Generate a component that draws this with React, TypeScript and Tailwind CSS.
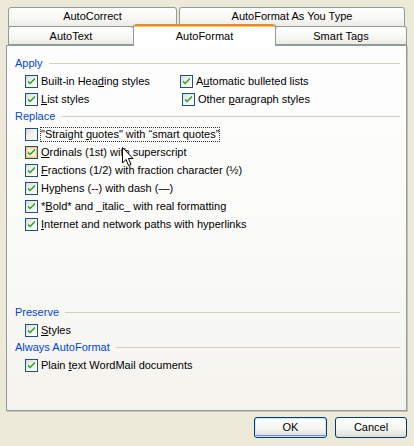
import React from "react";

const FONT = "font-['Tahoma','Liberation_Sans',sans-serif] text-[11px] leading-[13px]";

function Check({ checked, hot }: { checked: boolean; hot?: boolean }) {
  return (
    <span
      className={`relative flex h-[13px] w-[13px] shrink-0 items-center justify-center border border-[#1c5180] ${
        hot
          ? "bg-[linear-gradient(135deg,#f1efe2_0%,#fbfaf6_100%)] shadow-[inset_0_0_0_1px_#fbc76a,inset_0_0_0_2px_#fde3a3]"
          : "bg-[linear-gradient(135deg,#dcdcd7_0%,#f4f4f1_55%,#ffffff_100%)]"
      }`}
    >
      {checked ? (
        <svg viewBox="0 0 7 7" className="relative h-[7px] w-[7px]">
          <path d="M0 2.5 L0 4.5 L2 6.5 L7 1.5 L7 -0.5 L2 4.5 Z" fill="#21a121" />
        </svg>
      ) : null}
    </span>
  );
}

function Key({ children }: { children: React.ReactNode }) {
  return <span className="underline underline-offset-[1px]">{children}</span>;
}

function Item({
  checked = true,
  hot,
  focus,
  className = "",
  children,
}: {
  checked?: boolean;
  hot?: boolean;
  focus?: boolean;
  className?: string;
  children: React.ReactNode;
}) {
  return (
    <div className={`flex h-[18px] items-center gap-[2px] ${className}`}>
      <Check checked={checked} hot={hot} />
      <span className={focus ? "border border-dotted border-[#333]" : "px-[1px]"}>{children}</span>
    </div>
  );
}

function Section({ label }: { label: string }) {
  return (
    <div className="flex h-[17px] items-center gap-[6px] text-[#0046d5]">
      <span>{label}</span>
      <div className="h-px flex-1 bg-[#d0d0bf]" />
    </div>
  );
}

function Tab({ label, className = "" }: { label: string; className?: string }) {
  return (
    <div
      className={`flex items-center justify-center rounded-t-[3px] border border-[#919b9c] bg-[linear-gradient(180deg,#ffffff_0%,#f7f7f4_60%,#ecebe5_100%)] ${className}`}
    >
      {label}
    </div>
  );
}

function Cursor() {
  return (
    <svg viewBox="0 0 12 20" className="absolute left-[122px] top-[147px] h-[20px] w-[12px]">
      <path d="M0.5 0.5 L0.5 16 L4 12.5 L6.5 18.5 L9 17.5 L6.5 11.5 L11 11.5 Z" fill="#fff" stroke="#000" strokeWidth="1" />
    </svg>
  );
}

export default function App() {
  return (
    <div className={`relative h-[446px] w-[414px] bg-[#ece9d8] pl-[6px] pr-[7px] pt-[7px] text-black ${FONT}`}>
      <div className="flex h-[20px] gap-[2px] px-[2px]">
        <Tab label="AutoCorrect" className="w-[169px] pb-[1px]" />
        <Tab label="AutoFormat As You Type" className="flex-1 pb-[1px]" />
      </div>
      <div className="relative z-10 -mt-[1px] flex h-[19px] items-end pl-[2px]">
        <Tab label="AutoText" className="h-[19px] w-[125px] border-r-0 pt-[1px]" />
        <div className="-mb-px flex h-[22px] w-[143px] flex-col rounded-t-[3px] border-x border-[#919b9c] bg-white">
          <div className="h-[3px] rounded-t-[3px] border-t-2 border-[#e68b2c] bg-[#ffc83c]" />
          <div className="flex flex-1 items-center justify-center pb-[1px]">AutoFormat</div>
        </div>
        <Tab label="Smart Tags" className="h-[19px] flex-1 border-l-0 pt-[1px]" />
      </div>
      <div className="flex h-[366px] flex-col border border-[#919b9c] bg-[linear-gradient(180deg,#fefefe_0%,#fbfbf9_50%,#f4f3ee_100%)] pl-[8px] pr-[6px] pt-[9px] shadow-[1px_1px_0_#c5c2b2]">
        <Section label="Apply" />
        <div className="flex">
          <div className="w-[165px] pl-[10px]">
            <Item>
              Built-in Hea<Key>d</Key>ing styles
            </Item>
            <Item>
              <Key>L</Key>ist styles
            </Item>
          </div>
          <div>
            <Item>
              A<Key>u</Key>tomatic bulleted lists
            </Item>
            <Item className="pl-[2px]">
              Other <Key>p</Key>aragraph styles
            </Item>
          </div>
        </div>
        <Section label="Replace" />
        <div className="pl-[10px]">
          <Item checked={false} focus>
            "Straight <Key>q</Key>uotes" with “smart quotes”
          </Item>
          <Item hot>
            <Key>O</Key>rdinals (1st) with superscript
          </Item>
          <Item>
            <Key>F</Key>ractions (1/2) with fraction character (½)
          </Item>
          <Item>
            Hy<Key>p</Key>hens (--) with dash (—)
          </Item>
          <Item>
            *<Key>B</Key>old* and _italic_ with real formatting
          </Item>
          <Item>
            <Key>I</Key>nternet and network paths with hyperlinks
          </Item>
        </div>
        <div className="h-[71px]" />
        <Section label="Preserve" />
        <div className="pl-[10px]">
          <Item>
            <Key>S</Key>tyles
          </Item>
        </div>
        <Section label="Always AutoFormat" />
        <div className="pl-[10px]">
          <Item>
            Plain <Key>t</Key>ext WordMail documents
          </Item>
        </div>
      </div>
      <div className="mt-[6px] flex justify-end gap-[8px]">
        <button className="flex h-[21px] w-[73px] items-center justify-center rounded-[3px] border border-[#003c74] bg-[linear-gradient(180deg,#ffffff_0%,#f4f4f0_60%,#dedbd0_100%)] shadow-[inset_0_0_0_1px_#cee7ff,inset_0_-1px_0_1px_#6982ee]">
          OK
        </button>
        <button className="flex h-[21px] w-[72px] items-center justify-center rounded-[3px] border border-[#003c74] bg-[linear-gradient(180deg,#ffffff_0%,#f4f4f0_60%,#dedbd0_100%)]">
          Cancel
        </button>
      </div>
      <Cursor />
    </div>
  );
}
